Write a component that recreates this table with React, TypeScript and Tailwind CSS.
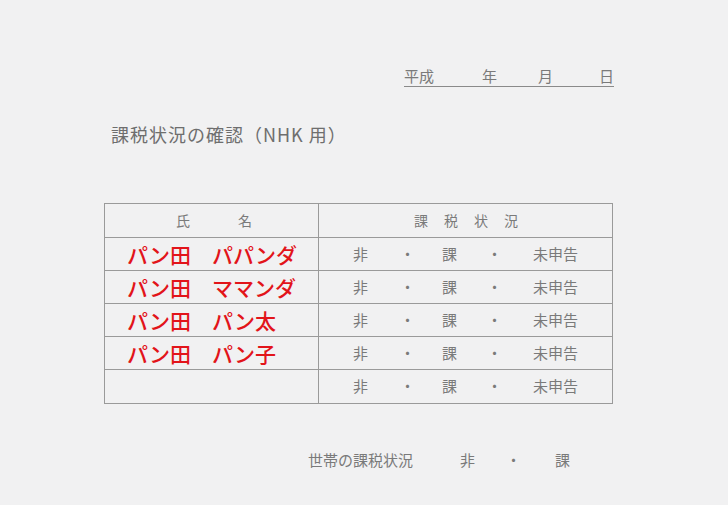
import React from "react";

const jp = { fontFamily: '"Noto Sans CJK JP", "Noto Sans", sans-serif' };

const names: string[][] = [
  ["パン田", "パパンダ"],
  ["パン田", "ママンダ"],
  ["パン田", "パン太"],
  ["パン田", "パン子"],
  [],
];

const StatusCell: React.FC = () => (
  <div className="flex items-center text-[15px] text-[#7a7a7a] h-full">
    <span className="ml-[34px] w-[15px]">非</span>
    <span className="ml-[32px] w-[15px] text-center">・</span>
    <span className="ml-[27px] w-[15px]">課</span>
    <span className="ml-[30px] w-[15px] text-center">・</span>
    <span className="ml-[31px]">未申告</span>
  </div>
);

const App: React.FC = () => {
  return (
    <div className="w-[728px] h-[505px] bg-[#f1f1f2] overflow-hidden" style={jp}>
      {/* date line */}
      <div className="pt-[65px] pl-[404px]">
        <div className="w-[210px] flex items-end whitespace-nowrap border-b border-[#8a8a8a] text-[15px] leading-[21px] text-[#7a7a7a]">
          <span className="shrink-0">平成</span>
          <span className="ml-[48px] shrink-0">年</span>
          <span className="ml-[41px] shrink-0">月</span>
          <span className="ml-[46px] shrink-0">日</span>
        </div>
      </div>

      {/* title */}
      <div className="mt-[34px] pl-[111px] text-[18px] leading-[26px] tracking-[1px] text-[#6e6e6e] whitespace-nowrap">
        課税状況の確認（NHK 用）
      </div>

      {/* table */}
      <div className="mt-[56px] ml-[104px] w-[509px] border border-[#9a9a9a]">
        <div className="flex h-[34px] border-b border-[#9a9a9a] text-[14px] text-[#7a7a7a]">
          <div className="w-[214px] border-r border-[#9a9a9a] flex items-center">
            <span className="ml-[71px]">氏</span>
            <span className="ml-[48px]">名</span>
          </div>
          <div className="flex-1 flex items-center">
            <span className="ml-[95px]">課</span>
            <span className="ml-[16px]">税</span>
            <span className="ml-[16px]">状</span>
            <span className="ml-[16px]">況</span>
          </div>
        </div>
        {names.map((n, i) => (
          <div
            key={i}
            className={`flex h-[33px] ${i < names.length - 1 ? "border-b border-[#9a9a9a]" : ""}`}
          >
            <div className="w-[214px] border-r border-[#9a9a9a] flex items-center text-[21px] font-medium text-[#e2141a] leading-none">
              {n.length > 0 && (
                <>
                  <span className="ml-[22px]">{n[0]}</span>
                  <span className="ml-[21px]">{n[1]}</span>
                </>
              )}
            </div>
            <div className="flex-1">
              <StatusCell />
            </div>
          </div>
        ))}
      </div>

      {/* household */}
      <div className="mt-[45px] pl-[308px] flex items-center text-[15px] leading-[22px] text-[#7a7a7a]">
        <span>世帯の課税状況</span>
        <span className="ml-[47px]">非</span>
        <span className="ml-[31px] w-[15px] text-center">・</span>
        <span className="ml-[34px]">課</span>
      </div>
    </div>
  );
};

export default App;
